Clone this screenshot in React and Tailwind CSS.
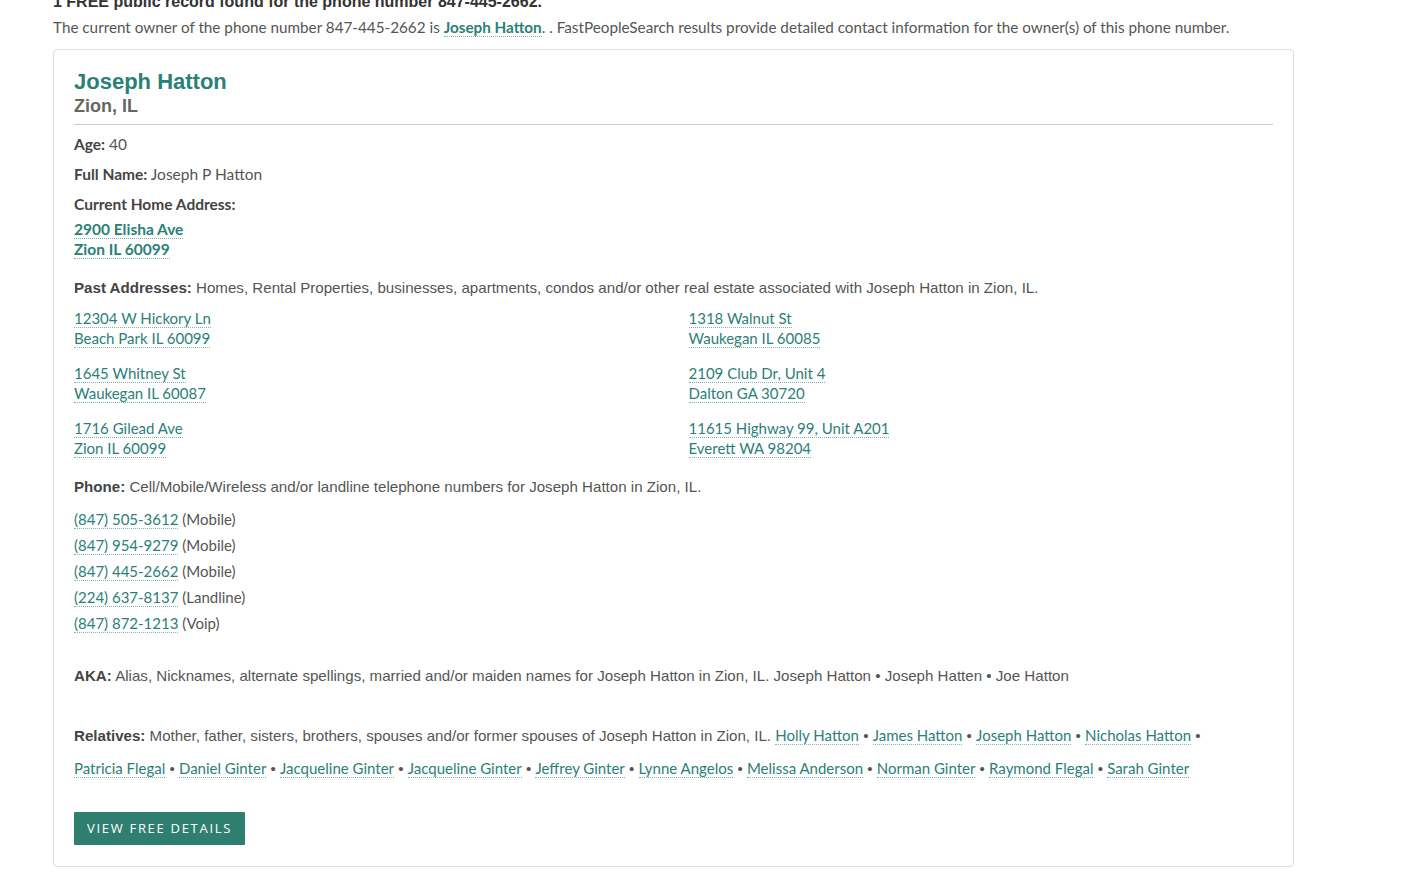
import React from 'react';

const seg = "font-['Lato','Noto_Sans',sans-serif]";
const arial = "font-['Liberation_Sans',Arial,sans-serif] text-[15.12px]";
const linkCls = 'text-[#2a8078] border-b border-dotted border-[#2a8078]/60';

const pastAddresses = [
  ['12304 W Hickory Ln', 'Beach Park IL 60099'],
  ['1318 Walnut St', 'Waukegan IL 60085'],
  ['1645 Whitney St', 'Waukegan IL 60087'],
  ['2109 Club Dr, Unit 4', 'Dalton GA 30720'],
  ['1716 Gilead Ave', 'Zion IL 60099'],
  ['11615 Highway 99, Unit A201', 'Everett WA 98204'],
];

const phones = [
  ['(847) 505-3612', 'Mobile'],
  ['(847) 954-9279', 'Mobile'],
  ['(847) 445-2662', 'Mobile'],
  ['(224) 637-8137', 'Landline'],
  ['(847) 872-1213', 'Voip'],
];

const relatives = [
  'Holly Hatton', 'James Hatton', 'Joseph Hatton', 'Nicholas Hatton',
  'Patricia Flegal', 'Daniel Ginter', 'Jacqueline Ginter', 'Jacqueline Ginter',
  'Jeffrey Ginter', 'Lynne Angelos', 'Melissa Anderson', 'Norman Ginter',
  'Raymond Flegal', 'Sarah Ginter',
];

export default function App() {
  return (
    <div className={`min-h-screen bg-white ${seg} text-[15px] text-[#555]`}>
      <div className="pl-[53px] w-[1294px]">
        {/* Header */}
        <h2 className={`${arial} !text-[16px] font-bold text-[#333] leading-[20px] -mt-[8px]`}>
          1 FREE public record found for the phone number 847-445-2662.
        </h2>
        <p className="mt-[5px] leading-[20px] text-[15.25px]">
          The current owner of the phone number 847-445-2662 is{' '}
          <a className={`${linkCls} font-bold`}>Joseph Hatton</a>. . FastPeopleSearch results provide detailed contact information for the owner(s) of this phone number.
        </p>

        {/* Card */}
        <div className="mt-[12px] border border-[#ddd] rounded-[4px] px-[20px] pt-[19px] pb-[21px]">
          <h2 className="font-['Liberation_Sans',Arial,sans-serif] font-bold text-[22px] leading-[26px] text-[#2a8078]">Joseph Hatton</h2>
          <h3 className="font-['Liberation_Sans',Arial,sans-serif] font-bold text-[18px] leading-[22px] text-[#666]">Zion, IL</h3>
          <hr className="mt-[7px] border-t border-[#ccc]" />

          <div className="mt-[9px] leading-[20px] text-[15.5px]">
            <p><b className="text-[#444]">Age:</b> 40</p>
            <p className="mt-[10px]"><b className="text-[#444]">Full Name:</b> Joseph P Hatton</p>
            <p className="mt-[10px]"><b className="text-[#444]">Current Home Address:</b></p>
            <div className="mt-[5px] font-bold">
              <a className={linkCls}>2900 Elisha Ave</a>
              <br />
              <a className={linkCls}>Zion IL 60099</a>
            </div>
          </div>

          <p className={`${arial} mt-[19px] leading-[20px]`}>
            <b className="text-[#444]">Past Addresses:</b> Homes, Rental Properties, businesses, apartments, condos and/or other real estate associated with Joseph Hatton in Zion, IL.
          </p>
          <div className="mt-[10px] grid grid-cols-2 gap-x-[30px] gap-y-[15px] leading-[20px]">
            {pastAddresses.map(([street, city]) => (
              <div key={street + city}>
                <a className={linkCls}>{street}</a>
                <br />
                <a className={linkCls}>{city}</a>
              </div>
            ))}
          </div>

          <p className={`${arial} mt-[19px] leading-[20px]`}>
            <b className="text-[#444]">Phone:</b> Cell/Mobile/Wireless and/or landline telephone numbers for Joseph Hatton in Zion, IL.
          </p>
          <div className="mt-[12px] flex flex-col gap-[6px] leading-[20px]">
            {phones.map(([num, type]) => (
              <div key={num}>
                <a className={linkCls}>{num}</a> ({type})
              </div>
            ))}
          </div>

          <p className={`${arial} mt-[33px] leading-[20px]`}>
            <b className="text-[#444]">AKA:</b> Alias, Nicknames, alternate spellings, married and/or maiden names for Joseph Hatton in Zion, IL. Joseph Hatton • Joseph Hatten • Joe Hatton
          </p>

          <p className={`${arial} mt-[33px] leading-[33px]`}>
            <b className="text-[#444]">Relatives:</b> Mother, father, sisters, brothers, spouses and/or former spouses of Joseph Hatton in Zion, IL.{' '}
            {relatives.map((r, i) => (
              <React.Fragment key={i}>
                <a className={`${linkCls} ${seg} text-[15px] whitespace-nowrap`}>{r}</a>
                {i < relatives.length - 1 ? ' • ' : ''}
              </React.Fragment>
            ))}
          </p>

          <button className="mt-[27px] h-[33px] px-[13px] bg-[#2f7f70] text-white text-[13px] tracking-[1.7px] uppercase rounded-[1px] font-['Open_Sans',sans-serif]">
            View Free Details
          </button>
        </div>
      </div>
    </div>
  );
}
